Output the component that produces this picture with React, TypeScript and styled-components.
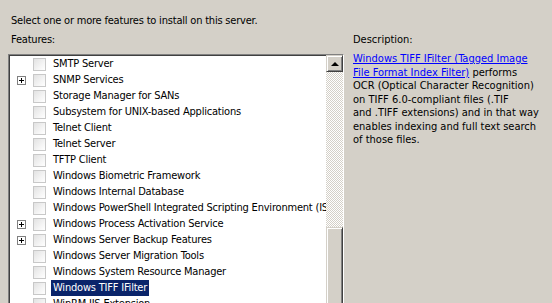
import styled, { createGlobalStyle } from "styled-components"

const GlobalStyle = createGlobalStyle`
  html, body {
    margin: 0;
    padding: 0;
    background: #d4d0c8;
    overflow: hidden;
  }
`

const Page = styled.div`
  width: 552px;
  height: 303px;
  padding: 14px 0 0 11px;
  box-sizing: border-box;
  font-family: "DejaVu Sans Condensed", "DejaVu Sans", sans-serif;
  font-size: 11px;
  letter-spacing: -0.2px;
  color: #000;
  overflow: hidden;
`

const Intro = styled.div`
  height: 14px;
  line-height: 14px;
`

const Body = styled.div`
  display: flex;
  gap: 9px;
  margin-top: 5px;
  margin-left: -3px;
`

const LeftColumn = styled.div`
  width: 336px;
  display: flex;
  flex-direction: column;
`

const Label = styled.div`
  height: 14px;
  line-height: 14px;
  padding-left: 3px;
  margin-bottom: 7px;
`

const ListBox = styled.div`
  height: 270px;
  display: flex;
  border: 1px solid;
  border-color: #808080 #ffffff #ffffff #808080;
  box-shadow: inset 1px 1px 0 #404040;
  background: #fff;
`

const Rows = styled.div`
  flex: 1;
  min-width: 0;
  padding-top: 1px;
  overflow: hidden;
`

const Row = styled.div`
  height: 16px;
  display: flex;
  align-items: center;
  padding-left: 8px;
  white-space: nowrap;
`

const Expander = styled.div<{ $visible: boolean }>`
  width: 9px;
  height: 9px;
  box-sizing: border-box;
  border: ${(p) => (p.$visible ? "1px solid #808080" : "1px solid transparent")};
  position: relative;
  flex: none;
  margin-right: 7px;

  &::before,
  &::after {
    content: "";
    display: ${(p) => (p.$visible ? "block" : "none")};
    position: absolute;
    background: #000;
  }
  &::before {
    left: 1px;
    top: 3px;
    width: 5px;
    height: 1px;
  }
  &::after {
    left: 3px;
    top: 1px;
    width: 1px;
    height: 5px;
  }
`

const CheckBox = styled.div`
  width: 13px;
  height: 13px;
  box-sizing: border-box;
  border: 1px solid #c8c8c8;
  background: linear-gradient(135deg, #e2e2e2 0%, #f4f4f4 60%, #ffffff 100%);
  flex: none;
  margin-right: 5px;
`

const ItemText = styled.span<{ $selected: boolean }>`
  flex: none;
  padding: 1px 2px;
  line-height: 14px;
  background: ${(p) => (p.$selected ? "#0a246a" : "transparent")};
  color: ${(p) => (p.$selected ? "#fff" : "#000")};
`

const ScrollBar = styled.div`
  width: 17px;
  flex: none;
  display: flex;
  flex-direction: column;
  background-color: #fff;
  background-image: conic-gradient(
    #d4d0c8 25%,
    #fff 25% 50%,
    #d4d0c8 50% 75%,
    #fff 75%
  );
  background-size: 2px 2px;
`

const RaisedButton = styled.div`
  box-sizing: border-box;
  background: #d4d0c8;
  border: 1px solid;
  border-color: #d4d0c8 #404040 #404040 #d4d0c8;
  box-shadow: inset 1px 1px 0 #fff, inset -1px -1px 0 #808080;
`

const ArrowButton = styled(RaisedButton)`
  height: 17px;
  display: flex;
  align-items: center;
  justify-content: center;

  &::before {
    content: "";
    width: 0;
    height: 0;
    border-left: 4px solid transparent;
    border-right: 4px solid transparent;
    border-bottom: 4px solid #000;
  }
`

const Track = styled.div`
  height: 155px;
`

const Thumb = styled(RaisedButton)`
  flex: 1;
`

const Description = styled.div`
  width: 200px;
  letter-spacing: 0;
`

const DescLabel = styled.div`
  height: 14px;
  line-height: 14px;
  margin-bottom: 5px;
`

const DescText = styled.div`
  line-height: 13.5px;
  white-space: nowrap;
`

const Link = styled.span`
  color: #0000ff;
  text-decoration: underline;
`

const items: { name: string; expandable?: boolean; selected?: boolean }[] = [
  { name: "SMTP Server" },
  { name: "SNMP Services", expandable: true },
  { name: "Storage Manager for SANs" },
  { name: "Subsystem for UNIX-based Applications" },
  { name: "Telnet Client" },
  { name: "Telnet Server" },
  { name: "TFTP Client" },
  { name: "Windows Biometric Framework" },
  { name: "Windows Internal Database" },
  { name: "Windows PowerShell Integrated Scripting Environment (ISE)" },
  { name: "Windows Process Activation Service", expandable: true },
  { name: "Windows Server Backup Features", expandable: true },
  { name: "Windows Server Migration Tools" },
  { name: "Windows System Resource Manager" },
  { name: "Windows TIFF IFilter", selected: true },
  { name: "WinRM IIS Extension" },
  { name: "WINS Server" },
]

function App() {
  return (
    <Page>
      <GlobalStyle />
      <Intro>Select one or more features to install on this server.</Intro>
      <Body>
        <LeftColumn>
          <Label>Features:</Label>
          <ListBox>
            <Rows>
              {items.map((item) => (
                <Row key={item.name}>
                  <Expander $visible={!!item.expandable} />
                  <CheckBox />
                  <ItemText $selected={!!item.selected}>{item.name}</ItemText>
                </Row>
              ))}
            </Rows>
            <ScrollBar>
              <ArrowButton />
              <Track />
              <Thumb />
            </ScrollBar>
          </ListBox>
        </LeftColumn>
        <Description>
          <DescLabel>Description:</DescLabel>
          <DescText>
            <Link>Windows TIFF IFilter (Tagged Image</Link>
            <br />
            <Link>File Format Index Filter)</Link> performs
            <br />
            OCR (Optical Character Recognition)
            <br />
            on TIFF 6.0-compliant files (.TIF
            <br />
            and .TIFF extensions) and in that way
            <br />
            enables indexing and full text search
            <br />
            of those files.
          </DescText>
        </Description>
      </Body>
    </Page>
  )
}

export default App
